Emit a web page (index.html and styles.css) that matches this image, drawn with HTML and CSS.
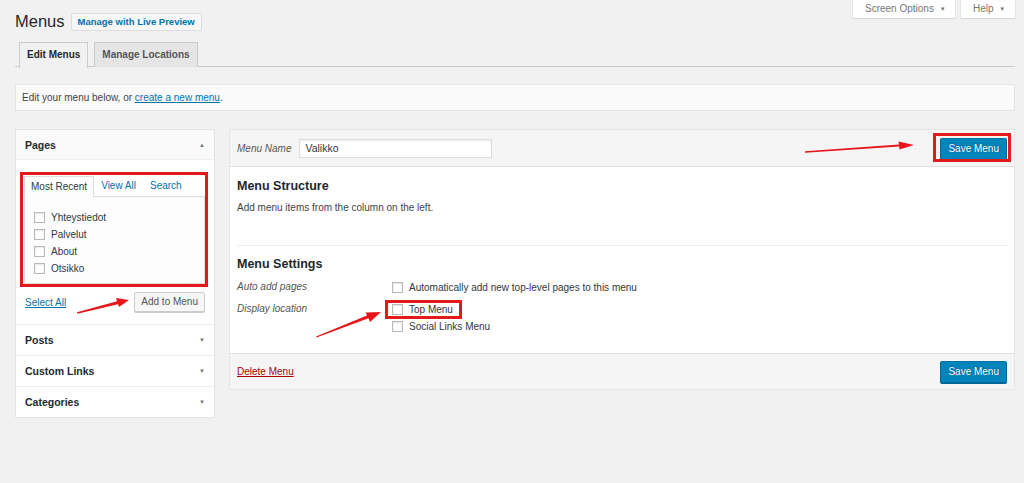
FILE: index.html
```html
<!DOCTYPE html>
<html>
<head>
<meta charset="utf-8">
<link rel="stylesheet" href="styles.css">
</head>
<body>
<div class="wrap">
  <div class="top">
    <div class="title-row">
      <h1 class="title">Menus</h1>
      <a class="title-action">Manage with Live Preview</a>
    </div>
    <div class="screen-meta">
      <span class="meta-tab so">Screen Options <span class="caret">▼</span></span>
      <span class="meta-tab help">Help <span class="caret">▼</span></span>
    </div>
  </div>

  <nav class="tabs">
    <span class="tab active">Edit Menus</span>
    <span class="tab">Manage Locations</span>
  </nav>

  <div class="notice">Edit your menu below, or <a class="link">create a new menu</a>.</div>

  <div class="columns">
    <div class="side">
      <div class="sec-head">Pages <span class="tri">▲</span></div>
      <div class="pages-body">
        <div class="redbox">
          <div class="inner-tabs">
            <span class="itab active">Most Recent</span>
            <span class="itab link-plain">View All</span>
            <span class="itab link-plain">Search</span>
          </div>
          <div class="list">
            <div class="item"><span class="cb"></span>Yhteystiedot</div>
            <div class="item"><span class="cb"></span>Palvelut</div>
            <div class="item"><span class="cb"></span>About</div>
            <div class="item"><span class="cb"></span>Otsikko</div>
          </div>
        </div>
        <div class="add-row">
          <a class="link">Select All</a>
          <span class="btn">Add to Menu</span>
        </div>
      </div>
      <div class="sec">Posts <span class="tri">▼</span></div>
      <div class="sec">Custom Links <span class="tri">▼</span></div>
      <div class="sec">Categories <span class="tri">▼</span></div>
    </div>

    <div class="main">
      <div class="main-head">
        <div class="name-field">
          <span class="ital">Menu Name</span>
          <span class="input">Valikko</span>
        </div>
        <span class="btn primary hl-save">Save Menu</span>
      </div>
      <div class="main-body">
        <h3 class="h3">Menu Structure</h3>
        <p class="desc">Add menu items from the column on the left.</p>
        <div class="divider"></div>
        <h3 class="h3 settings">Menu Settings</h3>
        <div class="set-row">
          <span class="ital set-label">Auto add pages</span>
          <div class="set-opts">
            <div class="item"><span class="cb"></span>Automatically add new top-level pages to this menu</div>
          </div>
        </div>
        <div class="set-row loc">
          <span class="ital set-label">Display location</span>
          <div class="set-opts">
            <div class="item"><span class="hl-top"><span class="cb"></span>Top Menu</span></div>
            <div class="item"><span class="cb"></span>Social Links Menu</div>
          </div>
        </div>
      </div>
      <div class="main-foot">
        <a class="delete">Delete Menu</a>
        <span class="btn primary">Save Menu</span>
      </div>
    </div>
  </div>
</div>

<svg class="arrows" width="1024" height="483" viewBox="0 0 1024 483">
  <polygon points="77,312.3 117,301.2 116,298 129,300 119,307 118,304.2 77.3,313.7" fill="#e8151b"/>
  <polygon points="805,151.3 899,144.6 898.5,141.5 914,145 899.5,149.5 899.2,146.6 805,152.7" fill="#e8151b"/>
  <polygon points="316,336.4 367,315.5 365.5,312.5 381,312 370,322 368.5,318.3 316.5,337.6" fill="#e8151b"/>
</svg>
</body>
</html>
```

FILE: styles.css
```css
* { box-sizing: border-box; }
html, body { margin: 0; padding: 0; }
body {
  background: #f1f1f1;
  font-family: "Liberation Sans", Arial, sans-serif;
  font-size: 10px;
  color: #444;
  width: 1024px;
  height: 483px;
  overflow: hidden;
  position: relative;
}
.wrap { padding: 0 9px 0 15px; }

.top { display: flex; justify-content: space-between; align-items: flex-start; }
.title-row { display: flex; align-items: center; gap: 6px; padding-top: 12px; height: 31px; }
.title { margin: 0; font-size: 16.5px; font-weight: 400; color: #23282d; line-height: 19px; }
.title-action {
  display: inline-block; height: 18px; line-height: 16px; padding: 0 6px;
  border: 1px solid #ddd; background: #f7f7f7; border-radius: 2px;
  color: #0073aa; font-weight: 700; font-size: 9.5px;
}
.screen-meta { display: flex; gap: 6px; }
.meta-tab {
  height: 18px; line-height: 18px; white-space: nowrap;
  background: #fff; color: #72777c; font-size: 10px;
  box-shadow: 0 0 0 1px rgba(0,0,0,.04), 0 1px 1px rgba(0,0,0,.06);
}
.meta-tab.so { width: 102px; padding-left: 12px; }
.meta-tab.help { width: 54px; padding-left: 12px; }
.caret { font-size: 6px; margin-left: 3px; position: relative; top: -1px; }

.tabs {
  display: flex; gap: 6px; padding-left: 4px; margin-top: 11px;
  border-bottom: 1px solid #ccc; height: 25px;
}
.tab {
  height: 25px; line-height: 23px; padding: 0 7px;
  border: 1px solid #ccc; border-bottom: none;
  background: #e5e5e5; color: #555; font-weight: 700; font-size: 10px;
}
.tab.active { background: #f1f1f1; color: #23282d; height: 26px; }

.notice {
  margin-top: 17px; height: 27px; line-height: 25px; padding: 0 6px;
  background: #fafafa; border: 1px solid #e5e5e5; color: #444; font-size: 10px;
}
.link { color: #0073aa; text-decoration: underline; }
.link-plain { color: #0073aa; }

.columns { display: flex; gap: 14px; margin-top: 18px; align-items: flex-start; }
.side { width: 200px; background: #fff; border: 1px solid #e5e5e5; }
.sec-head, .sec {
  display: flex; justify-content: space-between; align-items: center;
  padding: 0 9px; font-weight: 700; font-size: 10.5px; color: #23282d;
}
.sec-head { height: 30px; border-bottom: 1px solid #eee; background: #fafafa; }
.sec { height: 31px; border-top: 1px solid #eee; }
.tri { font-size: 6px; color: #72777c; font-weight: 400; }

.pages-body { padding: 12px 6px 12px 4px; }
.redbox { border: 3px solid #e21a1a; padding: 1px 0 0 1px; height: 115px; }
.inner-tabs { display: flex; height: 20px; align-items: stretch; }
.itab { line-height: 20px; padding: 0 6px; font-size: 10px; }
.itab.active { border: 1px solid #ddd; border-bottom: none; background: #fdfdfd; color: #32373c; line-height: 19px; position: relative; z-index: 1; height: 21px; }
.itab.link-plain { padding: 0 7px; }
.list { border: 1px solid #ddd; background: #fdfdfd; height: 88px; padding: 12px 9px 0; }
.item { display: flex; align-items: center; height: 17px; font-size: 10px; color: #32373c; }
.cb {
  display: inline-block; width: 11px; height: 11px; margin-right: 6px;
  border: 1px solid #b4b9be; background: #fff;
  box-shadow: inset 0 1px 2px rgba(0,0,0,.1);
}
.add-row { display: flex; justify-content: space-between; align-items: center; margin-top: 5px; padding: 0 3px 0 5px; }
.btn {
  display: inline-block; height: 20px; line-height: 18px; padding: 0 6px;
  border: 1px solid #ccc; background: #f7f7f7; border-radius: 2px;
  box-shadow: 0 1px 0 #ccc; color: #555; font-size: 10px; white-space: nowrap;
}
.btn.primary {
  height: 22px; line-height: 20px; padding: 0 7px;
  background: #0085ba; border-color: #0073aa #006799 #006799;
  box-shadow: 0 1px 0 #006799; color: #fff;
  text-shadow: 0 -1px 1px #006799, 1px 0 1px #006799;
}

.main { flex: 1; background: #fff; border: 1px solid #e5e5e5; }
.main-head {
  height: 37px; display: flex; justify-content: space-between; align-items: center;
  padding: 0 7px; background: #f5f5f5; border-bottom: 1px solid #dfdfdf;
}
.name-field { display: flex; align-items: center; gap: 8px; }
.ital { font-style: italic; color: #555; font-size: 10px; }
.input {
  width: 193px; height: 19px; line-height: 17px; padding: 0 5px;
  border: 1px solid #ddd; background: #fff; color: #32373c; font-size: 10.5px;
  box-shadow: inset 0 1px 2px rgba(0,0,0,.07);
}
.hl-save { position: relative; margin-top: 2px; }
.hl-save::after {
  content: ""; position: absolute; left: -8px; right: -5px; top: -6px; bottom: -3px;
  border: 3px solid #e21a1a;
}
.main-body { padding: 11px 7px 18px; }
.h3 { margin: 0; font-size: 12.5px; font-weight: 700; color: #23282d; line-height: 16px; }
.desc { margin: 7px 0 0; line-height: 14px; font-size: 10px; color: #444; }
.divider { border-top: 1px solid #eee; margin-top: 30px; }
.settings { margin-top: 10px; }
.set-row { display: flex; margin-top: 7px; }
.set-row.loc { margin-top: 5px; }
.set-label { width: 155px; flex: none; line-height: 16px; }
.set-opts .item { height: 17px; }
.hl-top { position: relative; display: inline-flex; align-items: center; }
.hl-top::after {
  content: ""; position: absolute; left: -7px; right: -9px; top: -4px; bottom: -4px;
  border: 3px solid #e21a1a;
}
.main-foot {
  height: 36px; display: flex; justify-content: space-between; align-items: center;
  padding: 0 7px; background: #f5f5f5; border-top: 1px solid #dfdfdf;
}
.delete { color: #a00; text-decoration: underline; font-size: 10px; }

.arrows { position: absolute; left: 0; top: 0; pointer-events: none; }
```
